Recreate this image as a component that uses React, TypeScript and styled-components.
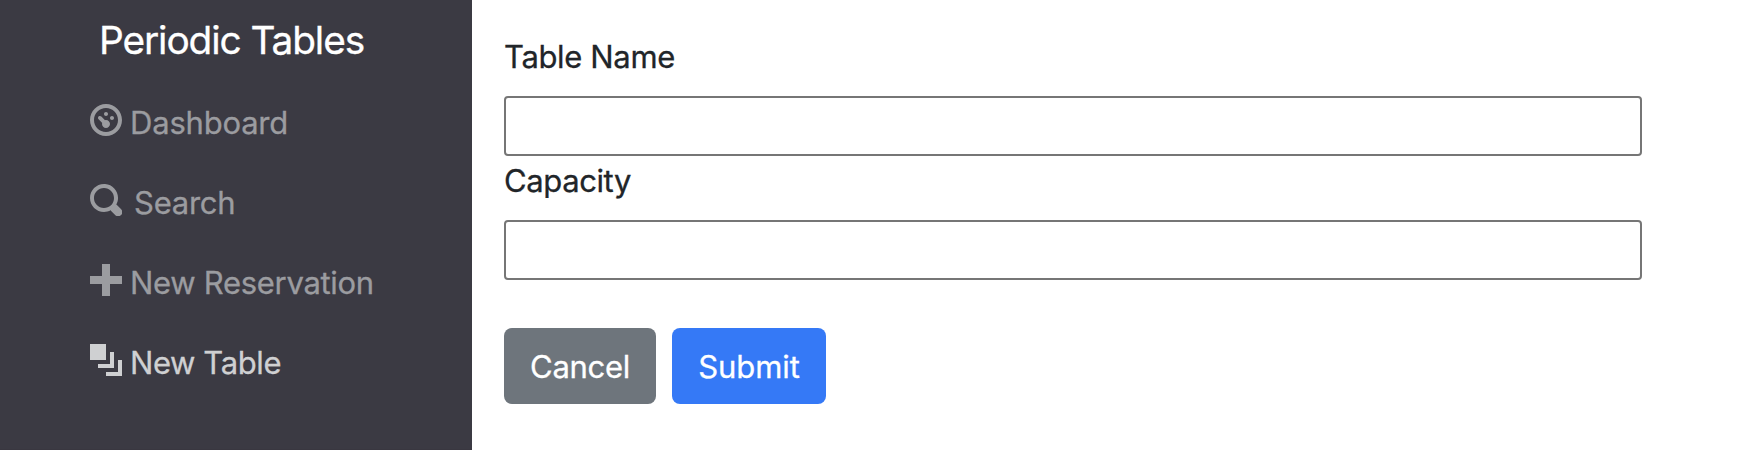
import React from "react";
import styled, { createGlobalStyle } from "styled-components";

const GlobalStyle = createGlobalStyle`
  *, *::before, *::after { box-sizing: border-box; }
  body {
    margin: 0;
    background: #fff;
    color: #212529;
    font-family: Inter, Roboto, "Liberation Sans", sans-serif;
    font-size: 31px;
    font-weight: 400;
    line-height: 48px;
    -webkit-text-stroke: 0.3px currentColor;
  }
`;

const Page = styled.div`
  display: flex;
  height: 450px;
  overflow: hidden;
`;

const Sidebar = styled.nav`
  flex: none;
  width: 472px;
  padding: 10px 0 0 90px;
  background: #3b3a43;
  border-bottom: 1px solid #393740;
`;

const Brand = styled.div`
  height: 72px;
  padding-left: 9px;
  color: #fff;
  font-size: 38.8px;
  line-height: 60px;
  letter-spacing: -1.1px;
  white-space: nowrap;
`;

const NavItem = styled.a<{ $active?: boolean; $gap?: number; $tracking: number }>`
  display: flex;
  align-items: center;
  gap: ${(p) => p.$gap ?? 8}px;
  height: 80px;
  color: ${(p) => (p.$active ? "#cfd0d2" : "#9b9ca0")};
  letter-spacing: ${(p) => p.$tracking}px;
  white-space: nowrap;

  span { padding-top: 2px; }
`;

const Icon = styled.svg`
  flex: none;
  width: 32px;
  height: 32px;
  margin-bottom: 4px;
  fill: currentColor;
`;

const Form = styled.form`
  flex: 1;
  padding: 33px 104px 0 32px;
`;

const Label = styled.label<{ $tracking: number }>`
  display: block;
  margin-bottom: 15px;
  letter-spacing: ${(p) => p.$tracking}px;
`;

const Input = styled.input`
  display: block;
  width: 100%;
  height: 60px;
  margin-bottom: 1px;
  padding: 2px 4px;
  border: 2px solid #767676;
  border-radius: 4px;
  background: #fff;
  font: inherit;
  outline: none;
`;

const Actions = styled.div`
  display: flex;
  gap: 16px;
  margin-top: 48px;
`;

const Button = styled.button<{ $primary?: boolean; $tracking: number }>`
  width: ${(p) => (p.$primary ? 154 : 152)}px;
  height: 76px;
  padding: 2px 0 0;
  border: 0;
  border-radius: 8px;
  background: ${(p) => (p.$primary ? "#3579f6" : "#6e757c")};
  color: #fff;
  font: inherit;
  letter-spacing: ${(p) => p.$tracking}px;
`;

const icons = {
  dashboard:
    "M4 0c-2.2 0-4 1.8-4 4s1.8 4 4 4 4-1.8 4-4-1.8-4-4-4zm0 1c1.66 0 3 1.34 3 3s-1.34 3-3 3-3-1.34-3-3 1.34-3 3-3zm0 1c-.28 0-.5.22-.5.5s.22.5.5.5.5-.22.5-.5-.22-.5-.5-.5zm-1.66 1a.5.5 0 0 0-.19.84l.91.91c-.02.08-.06.16-.06.25 0 .55.45 1 1 1s1-.45 1-1-.45-1-1-1c-.09 0-.17.04-.25.06l-.91-.91a.5.5 0 0 0-.44-.16.5.5 0 0 0-.06 0zm3.16 0c-.28 0-.5.22-.5.5s.22.5.5.5.5-.22.5-.5-.22-.5-.5-.5z",
  search:
    "M3.5 0c-1.93 0-3.5 1.57-3.5 3.5s1.57 3.5 3.5 3.5c.59 0 1.17-.14 1.66-.41a1 1 0 0 0 .13.13l1 1a1.02 1.02 0 1 0 1.44-1.44l-1-1a1 1 0 0 0-.16-.13c.27-.49.44-1.06.44-1.66 0-1.93-1.55-3.5-3.5-3.5zm0 1c1.39 0 2.5 1.11 2.5 2.5 0 .66-.24 1.27-.66 1.72-.01.01-.02.02-.03.03a1 1 0 0 0-.13.13c-.44.4-1.04.63-1.69.63-1.39 0-2.5-1.11-2.5-2.5s1.11-2.5 2.5-2.5z",
  plus: "M3 0v3h-3v2h3v3h2v-3h3v-2h-3v-3h-2z",
  layers: "M0 0v4h4v-4h-4zm5 2v3h-3v1h4v-4h-1zm2 2v3h-3v1h4v-4h-1z",
};

const links = [
  { icon: icons.dashboard, text: "Dashboard", tracking: -0.2 },
  { icon: icons.search, text: "Search", tracking: -0.25, gap: 12 },
  { icon: icons.plus, text: "New Reservation", tracking: -0.3 },
  { icon: icons.layers, text: "New Table", tracking: -0.4, active: true },
];

export default function App() {
  return (
    <>
      <GlobalStyle />
      <Page>
        <Sidebar>
          <Brand>Periodic Tables</Brand>
          {links.map((l) => (
            <NavItem key={l.text} $active={l.active} $gap={l.gap} $tracking={l.tracking}>
              <Icon viewBox="0 0 8 8">
                <path d={l.icon} />
              </Icon>
              <span>{l.text}</span>
            </NavItem>
          ))}
        </Sidebar>
        <Form>
          <Label htmlFor="table_name" $tracking={-0.35}>Table Name</Label>
          <Input id="table_name" />
          <Label htmlFor="capacity" $tracking={-0.4}>Capacity</Label>
          <Input id="capacity" />
          <Actions>
            <Button type="button" $tracking={-0.3}>Cancel</Button>
            <Button type="button" $primary $tracking={-0.1}>Submit</Button>
          </Actions>
        </Form>
      </Page>
    </>
  );
}
